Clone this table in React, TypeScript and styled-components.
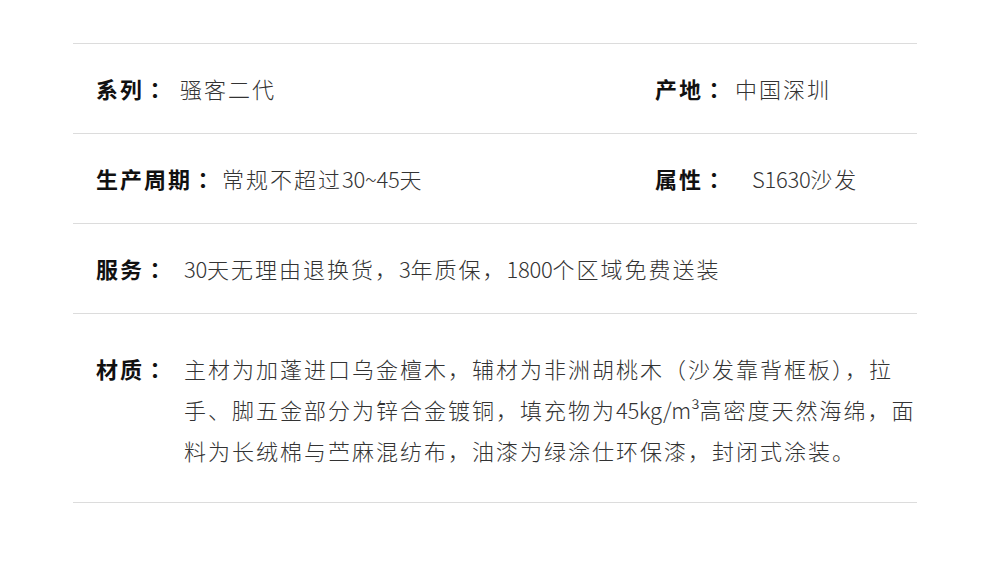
import React from 'react';
import styled, { createGlobalStyle } from 'styled-components';

const GlobalStyle = createGlobalStyle`
  html, body {
    margin: 0;
    padding: 0;
    background: #fff;
  }
  body {
    font-family: "Noto Sans CJK SC", "Noto Sans", sans-serif;
  }
`;

const Table = styled.div`
  width: 844px;
  margin: 43px 0 0 73px;
  border-top: 1px solid #dcdcdc;
`;

const Row = styled.div<{ $tall?: boolean }>`
  display: grid;
  grid-template-columns: 559px 1fr;
  align-items: ${(p) => (p.$tall ? 'start' : 'center')};
  height: ${(p) => (p.$tall ? 'auto' : '89px')};
  padding: ${(p) => (p.$tall ? '34px 0 31px' : '0')};
  padding-left: 23px;
  border-bottom: 1px solid #dcdcdc;
`;

const Item = styled.div<{ $span?: boolean }>`
  display: flex;
  align-items: flex-start;
  grid-column: ${(p) => (p.$span ? '1 / -1' : 'auto')};
  line-height: 41px;
`;

const Label = styled.span`
  flex: none;
  font-family: "Noto Sans CJK TC", "Noto Sans CJK SC", sans-serif;
  font-size: 22px;
  font-weight: 700;
  letter-spacing: 2px;
  color: #111;
`;

const Value = styled.span<{ $gap: number }>`
  padding-left: ${(p) => p.$gap}px;
  font-size: 22px;
  font-weight: 300;
  letter-spacing: 2px;
  color: #333;
`;

// latin runs sit tighter than the ideographs around them
const Latin = styled.span`
  letter-spacing: -0.3px;
`;

const mix = (text: string) =>
  text.split(/([A-Za-z0-9~\/³]+)/).map((part, i) =>
    i % 2 ? <Latin key={i}>{part}</Latin> : part
  );

type Spec = { label: string; value: string; gap: number; span?: boolean };

const Field: React.FC<Spec> = ({ label, value, gap, span }) => (
  <Item $span={span}>
    <Label>{label}</Label>
    <Value $gap={gap}>{mix(value)}</Value>
  </Item>
);

export default function App() {
  return (
    <>
      <GlobalStyle />
      <Table>
        <Row>
          <Field label="系列：" value="骚客二代" gap={12} />
          <Field label="产地：" value="中国深圳" gap={8} />
        </Row>
        <Row>
          <Field label="生产周期：" value="常规不超过30~45天" gap={6} />
          <Field label="属性：" value="S1630沙发" gap={25} />
        </Row>
        <Row>
          <Field label="服务：" value="30天无理由退换货，3年质保，1800个区域免费送装" gap={16} span />
        </Row>
        <Row $tall>
          <Field
            label="材质："
            gap={16}
            span
            value="主材为加蓬进口乌金檀木，辅材为非洲胡桃木（沙发靠背框板），拉手、脚五金部分为锌合金镀铜，填充物为45kg/m³高密度天然海绵，面料为长绒棉与苎麻混纺布，油漆为绿涂仕环保漆，封闭式涂装。"
          />
        </Row>
      </Table>
    </>
  );
}
